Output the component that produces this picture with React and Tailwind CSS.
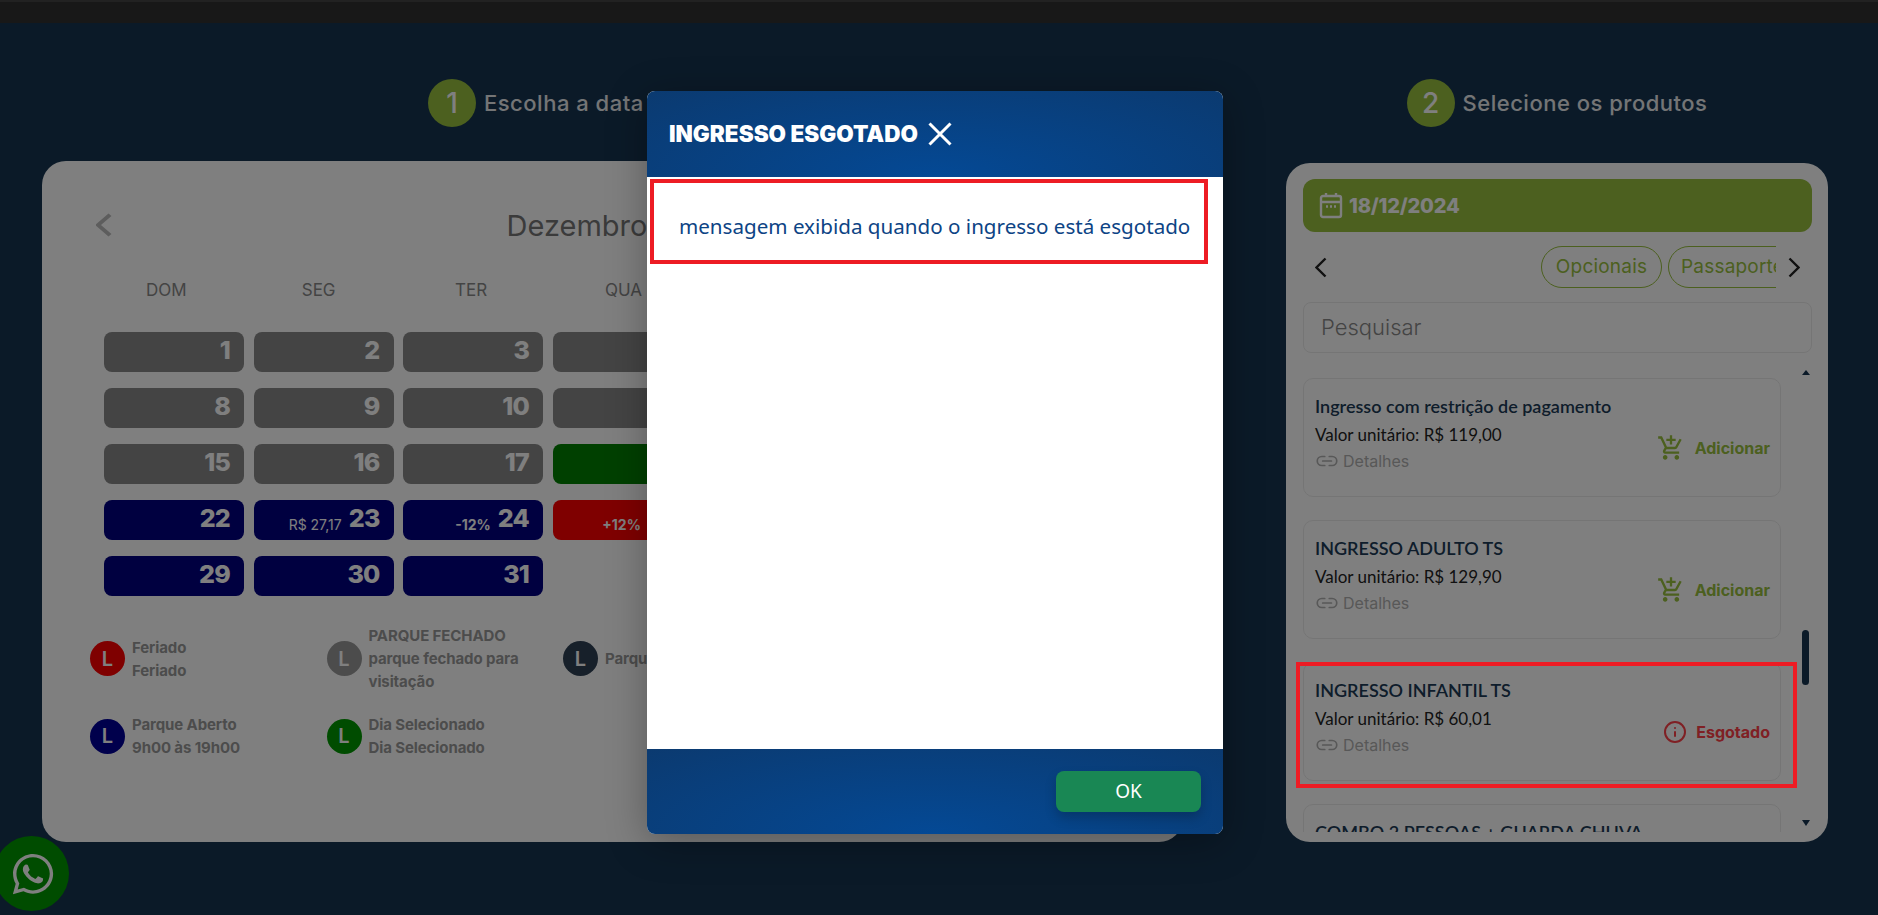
import React from 'react';
import { Info } from 'lucide-react';
import { FaWhatsapp } from 'react-icons/fa';
import { MdOutlineAddShoppingCart } from 'react-icons/md';
import { IoLinkOutline } from 'react-icons/io5';

const poppins = "font-['Inter',sans-serif]";
const lato = "font-['Lato',sans-serif]";
const noto = "font-['Noto_Sans',sans-serif]";

const weekDays = ['DOM', 'SEG', 'TER', 'QUA', 'QUI', 'SEX', 'SAB'];

const dayColor = (day) => {
    if (day < 18) return 'bg-[#888888]';
    if (day === 18) return 'bg-[#008000]';
    if (day === 25) return 'bg-[#ff0000]';
    return 'bg-[#000080]';
};

const dayNotes = {
    23: { text: 'R$ 27,17', className: 'font-normal' },
    24: { text: '-12%', className: 'font-bold' },
    25: { text: '+12%', className: 'font-bold' },
};

const days = Array.from({ length: 31 }, (_, i) => i + 1);

const legend = [
    { color: 'bg-[#ff0000]', lines: ['Feriado', 'Feriado'] },
    { color: 'bg-[#999999]', lines: ['PARQUE FECHADO', 'parque fechado para', 'visitação'] },
    { color: 'bg-[#2e4054]', lines: ['Parque'] },
    { color: '', lines: [] },
    { color: 'bg-[#000099]', lines: ['Parque Aberto', '9h00 às 19h00'] },
    { color: 'bg-[#009900]', lines: ['Dia Selecionado', 'Dia Selecionado'] },
];

const products = [
    { name: 'Ingresso com restrição de pagamento', price: 'R$ 119,00' },
    { name: 'INGRESSO ADULTO TS', price: 'R$ 129,90' },
    { name: 'INGRESSO INFANTIL TS', price: 'R$ 60,01', soldOut: true },
    { name: 'COMBO 2 PESSOAS + GUARDA CHUVA', price: 'R$ 199,90' },
];

const Chevron = ({ right, className, width = 2.4 }) => (
    <svg className={className} viewBox="0 0 12 21" fill="none" stroke="currentColor" strokeWidth={width} preserveAspectRatio="none">
        <path d={right ? 'M1.5 1.5 10.5 10.5 1.5 19.5' : 'M10.5 1.5 1.5 10.5 10.5 19.5'} />
    </svg>
);

const StepTitle = ({ number, children, className }) => (
    <div className={`flex items-center gap-2 h-12 ${className}`}>
        <div className={`w-12 h-12 rounded-full bg-[#98c03e] flex items-center justify-center text-white text-[28px] font-medium ${poppins}`}>
            {number}
        </div>
        <span className={`text-[#ffffff] opacity-90 text-[22px] font-medium tracking-[0.5px] ${poppins}`}>{children}</span>
    </div>
);

const DayCell = ({ day }) => {
    const note = dayNotes[day];
    return (
        <div className={`h-10 rounded-lg flex items-center justify-end pr-[14px] text-white ${poppins} ${dayColor(day)}`}>
            {note && <span className={`text-[14px] mt-[9px] mr-[7px] ${note.className}`}>{note.text}</span>}
            <span className="text-[25px] leading-none font-extrabold tracking-[-0.8px] mb-[3px]">{day}</span>
        </div>
    );
};

const ProductCard = ({ product }) => (
    <div className="h-[119px] shrink-0 rounded-[10px] border border-[#ebebeb] flex justify-between pl-[11px] pr-[10px] pt-[15px]">
        <div>
            <div className={`text-[18px] leading-6 font-semibold text-[#1c3a56] ${lato}`}>{product.name}</div>
            <div className={`text-[17px] leading-6 mt-[5px] text-[#222222] ${lato}`}>Valor unitário: {product.price}</div>
            <div className={`flex items-center gap-[4px] mt-[4px] h-5 text-[16px] text-[#b0b0b0] ${poppins}`}>
                <IoLinkOutline className="w-[24px] h-[24px]" />
                Detalhes
            </div>
        </div>
        {product.soldOut ? (
            <div className={`flex items-center gap-[9px] h-6 mt-[42px] text-[16px] font-bold text-[#ff4048] ${poppins}`}>
                <Info className="w-6 h-6" strokeWidth={2} />
                Esgotado
            </div>
        ) : (
            <div className={`flex items-center gap-[10px] h-[26px] mt-[41px] text-[16px] font-bold text-[#98c03e] ${poppins}`}>
                <MdOutlineAddShoppingCart className="w-[28px] h-[28px]" />
                Adicionar
            </div>
        )}
    </div>
);

const CalendarPanel = () => (
    <div className="w-[1141px] h-[681px] mt-[34px] bg-white rounded-[24px] pl-[62px]">
        <div className="flex items-center justify-between w-[1032px] ml-[-8px] pt-[38px] h-[90px] text-[#bbbbbb]">
            <Chevron className="w-4 h-6" width={3.2} />
            <span className={`text-[#777777] text-[29px] ml-[10px] mt-[2px] ${poppins}`}>Dezembro 2024</span>
            <Chevron right className="w-4 h-6" width={3.2} />
        </div>
        <div className="grid grid-cols-7 w-[1067px] ml-[-14px] mt-[27px] h-6">
            {weekDays.map((d) => (
                <div key={d} className={`text-center text-[17px] leading-6 text-[#888888] ${poppins}`}>{d}</div>
            ))}
        </div>
        <div className="grid grid-cols-7 w-[1037px] gap-x-[9.5px] gap-y-4 mt-[30px]">
            {days.map((d) => <DayCell key={d} day={d} />)}
        </div>
        <div className="grid grid-cols-4 items-center w-[946px] ml-[-14px] mt-[28px] gap-y-5">
            {legend.map((item, i) => (
                <div key={i} className="flex items-center gap-[7px]">
                    {item.color && (
                        <div className={`w-[35px] h-[35px] rounded-full flex items-center justify-center text-white text-[20px] font-semibold ${poppins} ${item.color}`}>L</div>
                    )}
                    <div className={`text-[15px] leading-[23px] font-bold tracking-[-0.1px] text-[#999999] ${poppins}`}>
                        {item.lines.map((line, j) => <div key={j}>{line}</div>)}
                    </div>
                </div>
            ))}
        </div>
    </div>
);

const ProductsPanel = () => (
    <div className="w-[542px] h-[679px] mt-[36px] bg-white rounded-[24px] pl-[17px] pr-[16px] pt-[16px]">
        <div className={`h-[53px] rounded-xl bg-[#98c03e] flex items-center gap-[6px] pl-[16px] text-white text-[20px] font-extrabold tracking-[-0.2px] ${poppins}`}>
            <svg className="w-[24px] h-[27px]" viewBox="0 0 24 27" fill="none" stroke="currentColor" strokeWidth="2.4">
                <rect x="2" y="4" width="20" height="21" rx="2" />
                <path d="M2 10h20M7 1v4M17 1v4" />
                <path d="M7 14.5h2M11 14.5h2M15 14.5h2" />
            </svg>
            18/12/2024
        </div>
        <div className="flex items-center justify-between h-[42px] mt-[14px] px-[12px] text-[#222222]">
            <Chevron className="w-3 h-[21px]" />
            <div className="flex items-center gap-[12px]">
                <div className={`flex gap-[6px] w-[235px] overflow-hidden text-[19px] tracking-[0.2px] text-[#98c03e] ${poppins}`}>
                    <span className="shrink-0 w-[121px] h-[42px] rounded-full border border-[#98c03e] flex items-center justify-center">Opcionais</span>
                    <span className="shrink-0 h-[42px] rounded-full border border-[#98c03e] flex items-center pl-[12px] pr-[12px]">Passaporte</span>
                </div>
                <Chevron right className="w-3 h-[21px]" />
            </div>
        </div>
        <div className={`h-[51px] mt-[14px] rounded-lg border border-[#ebebeb] flex items-center pl-[17px] text-[22px] font-light text-[#888888] ${poppins}`}>
            Pesquisar
        </div>
        <div className="flex mt-[15px]">
            <div className="w-[478px] h-[464px] overflow-hidden pt-[10px] flex flex-col gap-[23px]">
                {products.map((p) => <ProductCard key={p.name} product={p} />)}
            </div>
            <div className="w-[7px] ml-[21px] flex flex-col items-center">
                <div className="mt-[2px] w-0 h-0 border-x-[4px] border-x-transparent border-b-[5px] border-b-[#163450]" />
                <div className="mt-[255px] w-[7px] h-[55px] rounded-full bg-[#163450]" />
                <div className="mt-[135px] w-0 h-0 border-x-[4px] border-x-transparent border-t-[6px] border-t-[#163450]" />
            </div>
        </div>
    </div>
);

const Modal = () => (
    <div className="absolute left-[647px] top-[91px] w-[576px] h-[743px] rounded-lg overflow-hidden flex flex-col bg-white shadow-[0_8px_40px_rgba(0,0,0,0.3)]">
        <div className="h-[86px] shrink-0 pl-[22px] flex items-center gap-[10px] text-white bg-[radial-gradient(ellipse_at_bottom,#044995,#0b3a70)]">
            <span className={`text-[22.5px] font-black ${poppins}`}>INGRESSO ESGOTADO</span>
            <svg className="w-6 h-6" viewBox="0 0 24 24" fill="none" stroke="currentColor" strokeWidth="3">
                <path d="M1.5 1.5 22.5 22.5M22.5 1.5 1.5 22.5" />
            </svg>
        </div>
        <div className="flex-1">
            <div className={`h-[85px] w-[558px] ml-[3px] mt-[2px] border-4 border-[#ed1c24] pl-[25px] pt-[10px] flex items-center text-[20.6px] text-[#0d4485] ${noto}`}>
                mensagem exibida quando o ingresso está esgotado
            </div>
        </div>
        <div className="h-[85px] shrink-0 flex items-start justify-end pt-[22px] pr-[22px] bg-[radial-gradient(ellipse_at_bottom,#044995,#0b3a70)]">
            <button className={`w-[145px] h-[41px] rounded-lg bg-[#198754] text-white text-[19px] shadow-[0_6px_12px_rgba(0,0,0,0.2)] ${noto}`}>OK</button>
        </div>
    </div>
);

const App = () => (
    <div className="relative w-full h-[915px] overflow-hidden bg-[#163450]">
        <div className="h-[23px] bg-[#303030] border-t-2 border-[#444444]" />
        <div className="flex pl-[42px] gap-[103px] pt-[56px]">
            <div>
                <StepTitle number="1" className="pl-[386px]">Escolha a data do passeio</StepTitle>
                <CalendarPanel />
            </div>
            <div>
                <StepTitle number="2" className="justify-center">Selecione os produtos</StepTitle>
                <ProductsPanel />
            </div>
        </div>
        <div className="absolute left-[-6px] top-[836px] w-[75px] h-[75px] rounded-full bg-[#009900] flex items-center justify-center text-white">
            <FaWhatsapp className="w-[46px] h-[46px] ml-[2px]" />
        </div>
        <div className="absolute inset-0 bg-black/50" />
        <div className="absolute left-[1296px] top-[662px] w-[501px] h-[126px] border-4 border-[#ed1c24]" />
        <Modal />
    </div>
);

export default App;
